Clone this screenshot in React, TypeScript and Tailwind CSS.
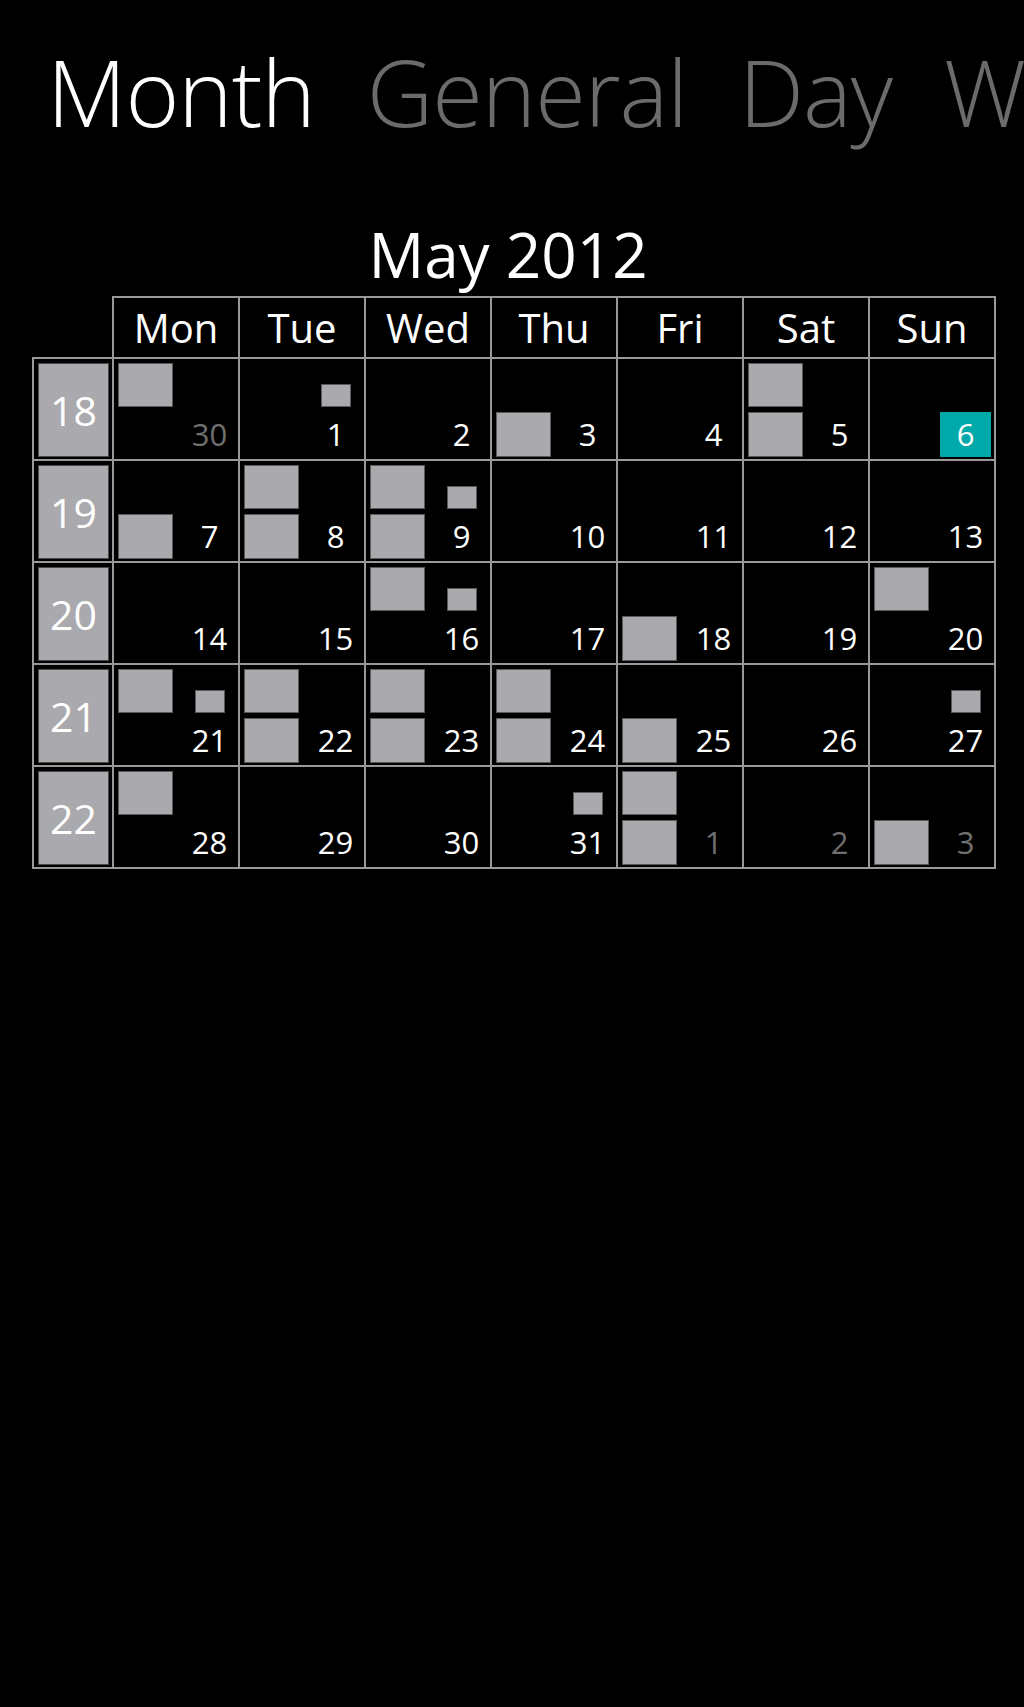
import React from 'react';

type Day = {
  n: number;
  muted?: boolean;
  tl?: boolean;
  bl?: boolean;
  small?: boolean;
  today?: boolean;
};

const weekDays = ['Mon', 'Tue', 'Wed', 'Thu', 'Fri', 'Sat', 'Sun'];

const weeks: { week: number; days: Day[] }[] = [
  {
    week: 18,
    days: [
      { n: 30, muted: true, tl: true },
      { n: 1, small: true },
      { n: 2 },
      { n: 3, bl: true },
      { n: 4 },
      { n: 5, tl: true, bl: true },
      { n: 6, today: true },
    ],
  },
  {
    week: 19,
    days: [
      { n: 7, bl: true },
      { n: 8, tl: true, bl: true },
      { n: 9, tl: true, bl: true, small: true },
      { n: 10 },
      { n: 11 },
      { n: 12 },
      { n: 13 },
    ],
  },
  {
    week: 20,
    days: [
      { n: 14 },
      { n: 15 },
      { n: 16, tl: true, small: true },
      { n: 17 },
      { n: 18, bl: true },
      { n: 19 },
      { n: 20, tl: true },
    ],
  },
  {
    week: 21,
    days: [
      { n: 21, tl: true, small: true },
      { n: 22, tl: true, bl: true },
      { n: 23, tl: true, bl: true },
      { n: 24, tl: true, bl: true },
      { n: 25, bl: true },
      { n: 26 },
      { n: 27, small: true },
    ],
  },
  {
    week: 22,
    days: [
      { n: 28, tl: true },
      { n: 29 },
      { n: 30 },
      { n: 31, small: true },
      { n: 1, muted: true, tl: true, bl: true },
      { n: 2, muted: true },
      { n: 3, muted: true, bl: true },
    ],
  },
];

function Block() {
  return <div className="w-[55px] h-full bg-[#aaa9ad] border border-[#5a5a5a]" />;
}

function DayCell({ day }: { day: Day }) {
  const numColor = day.muted ? 'text-[#6f6f6f]' : 'text-white';
  return (
    <div className="w-[126px] h-[102px] border-l-2 border-t-2 border-[#999999] pt-[4px] pb-[2px] pl-[4px] pr-[3px] flex flex-col gap-[5px]">
      <div className="h-[44px] flex justify-between">
        <div className="w-[55px] h-full">{day.tl && <Block />}</div>
        <div className="w-[51px] h-full flex items-end justify-center">
          {day.small && <div className="w-[30px] h-[23px] bg-[#aaa9ad] border border-[#5a5a5a]" />}
        </div>
      </div>
      <div className="h-[45px] flex justify-between">
        <div className="w-[55px] h-full">{day.bl && <Block />}</div>
        <div
          className={`w-[51px] h-full flex items-center justify-center text-[31px] leading-none ${numColor} ${
            day.today ? 'bg-[#00a9a9]' : ''
          }`}
        >
          {day.n}
        </div>
      </div>
    </div>
  );
}

export default function App() {
  return (
    <main className="min-h-screen w-full overflow-hidden bg-black text-white font-['Open_Sans',sans-serif]">
      {/* pivot header */}
      <div className="pt-[46px] pl-[47px] flex gap-[52px] whitespace-nowrap text-[92px] leading-none font-light tracking-[-1px]">
        <span className="text-white">Month</span>
        <span className="text-[#6b6b6b]">General</span>
        <span className="text-[#6b6b6b]">Day</span>
        <span className="text-[#6b6b6b]">Week</span>
      </div>

      {/* month calendar */}
      <div className="mt-[85px] ml-[32px] w-[964px]">
        <div className="h-[73px] text-center text-[62px] leading-none pr-[12px]">May 2012</div>

        <div className="ml-[80px] flex border-r-2 border-[#999999] w-[884px]">
          {weekDays.map((d) => (
            <div
              key={d}
              className="w-[126px] h-[61px] border-l-2 border-t-2 border-[#999999] flex items-center justify-center text-[40px] leading-none"
            >
              {d}
            </div>
          ))}
        </div>

        <div className="border-r-2 border-b-2 border-[#999999] w-[964px]">
          {weeks.map((w) => (
            <div key={w.week} className="flex">
              <div className="w-[80px] h-[102px] border-l-2 border-t-2 border-[#999999] pt-[4px] pl-[4px]">
                <div className="w-[71px] h-[94px] bg-[#aaa9ad] border border-[#4a4a4a] flex items-center justify-center text-[41px] leading-none text-white">
                  {w.week}
                </div>
              </div>
              {w.days.map((d, i) => (
                <DayCell key={i} day={d} />
              ))}
            </div>
          ))}
        </div>
      </div>
    </main>
  );
}
